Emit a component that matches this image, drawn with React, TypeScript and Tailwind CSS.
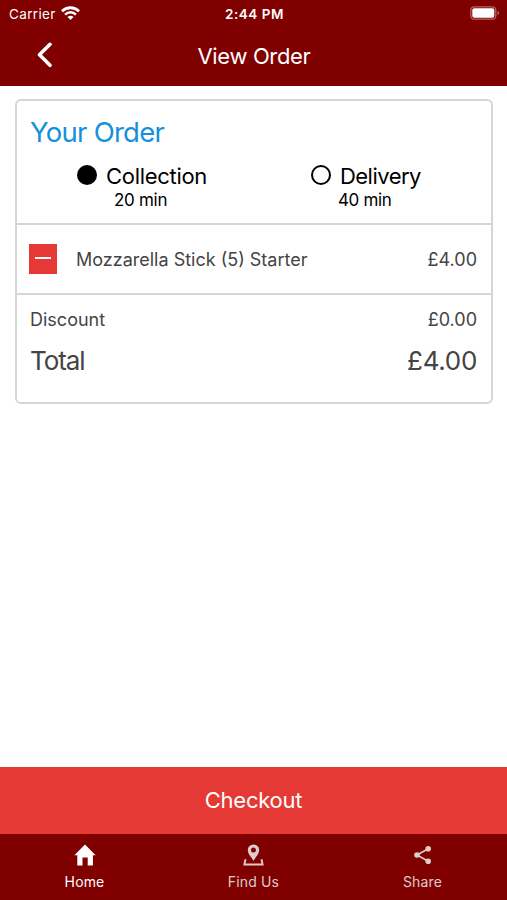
const tabs = [
  { label: "Home", icon: <HomeIcon />, active: true },
  { label: "Find Us", icon: <PinIcon />, active: false },
  { label: "Share", icon: <ShareIcon />, active: false },
];

function HomeIcon() {
  return (
    <svg className="w-[22px] h-[22px]" viewBox="0 0 22 22" fill="currentColor">
      <path d="M11 .6 21.6 11.2H18.9V21.4H13.7V13.6H8.5V21.4H3.3V11.2H.4z" />
    </svg>
  );
}

function PinIcon() {
  return (
    <svg className="w-[22px] h-[22px]" viewBox="0 0 22 22" fill="none">
      <path
        fillRule="evenodd"
        fill="currentColor"
        d="M10.500 .4a5.700 5.700 0 0 1 5.700 5.700c0 3.600-3.100 6.800-5.700 10.600C7.900 12.900 4.800 9.700 4.800 6.100A5.700 5.700 0 0 1 10.500 .4zm0 3.200a2.500 2.500 0 1 0 0 5 2.500 2.500 0 0 0 0-5z"
      />
      <path
        d="M2.500 15.200 1.400 20.500H19.600L18.500 15.200"
        stroke="currentColor"
        strokeWidth="1.900"
      />
    </svg>
  );
}

function ShareIcon() {
  return (
    <svg className="w-[22px] h-[22px]" viewBox="0 0 22 22" fill="currentColor">
      <path d="M16.200 4.800 5 11l11.200 6.200" fill="none" stroke="currentColor" strokeWidth="1.600" />
      <circle cx="16.200" cy="4.800" r="2.800" />
      <circle cx="5" cy="11" r="2.800" />
      <circle cx="16.200" cy="17.200" r="2.800" />
    </svg>
  );
}

function StatusBar() {
  return (
    <div className="grid grid-cols-3 items-center h-[28px] pl-[9px] pr-[7px] text-[13.5px]">
      <div className="flex items-center gap-[5px]">
        <span className="tracking-[0.35px]">Carrier</span>
        <svg className="w-[19px] h-[14px] -mt-[2px]" viewBox="0 0 19 14" fill="none">
          <path d="M1 5.200a12.200 12.200 0 0 1 17 0" stroke="white" strokeWidth="2.800" />
          <path d="M4.100 8.600a7.500 7.500 0 0 1 10.800 0" stroke="white" strokeWidth="2.500" />
          <path d="M6.500 11a4 4 0 0 1 6 0L9.500 14z" fill="white" />
        </svg>
      </div>
      <span className="text-center font-semibold tracking-[0.5px] whitespace-nowrap">2:44 PM</span>
      <svg className="w-[30px] h-[14px] justify-self-end -mt-[2px]" viewBox="0 0 30 14" fill="none">
        <rect x=".8" y=".8" width="25" height="12.400" rx="3.500" stroke="white" strokeOpacity=".4" strokeWidth="1.300" />
        <rect x="2.300" y="2.300" width="22" height="9.400" rx="2" fill="white" />
        <path d="M27.500 4.800c2 .8 2 3.600 0 4.400z" fill="white" fillOpacity=".45" />
      </svg>
    </div>
  );
}

function App() {
  return (
    <div className="flex flex-col h-[900px] bg-white font-['Inter',sans-serif] text-white">
      <header className="h-[86px] bg-[#800000]">
        <StatusBar />
        <div className="grid grid-cols-[60px_1fr_60px] items-center h-[56px]">
          <button className="pl-[37px] pb-[2px]">
            <svg className="w-[15px] h-[26px]" viewBox="0 0 15 26" fill="none">
              <path d="M13 2.300 2.500 12.800l10.500 10.500" stroke="white" strokeWidth="3.600" strokeLinecap="round" strokeLinejoin="round" />
            </svg>
          </button>
          <h1 className="pl-px text-center text-[22px] tracking-[-0.35px]">View Order</h1>
        </div>
      </header>

      <main className="flex-1 pl-[15px] pr-[14px] pt-[13px]">
        <section className="h-[305px] border-2 border-[#d6d6d6] rounded-md text-[#444444]">
          <div className="h-[124px] border-b-2 border-[#d6d6d6] text-black">
            <h2 className="pt-[13px] pl-[13px] text-[27.5px] leading-[36px] tracking-[-0.75px] text-[#1690dc]">Your Order</h2>
            <div className="flex justify-between pt-[12px] pl-[60px] pr-[70px]">
              <div>
                <div className="flex items-center gap-[9px] text-[22px] leading-[28px] tracking-[-0.3px]">
                  <span className="w-[20px] h-[20px] -mt-[2px] rounded-full bg-black" />
                  Collection
                </div>
                <p className="pl-[37px] text-[17px] leading-[20px] tracking-[-0.3px]">20 min</p>
              </div>
              <div>
                <div className="flex items-center gap-[9px] text-[22px] leading-[28px] tracking-[-0.5px]">
                  <span className="w-[20px] h-[20px] -mt-[2px] rounded-full border-2 border-black" />
                  Delivery
                </div>
                <p className="pl-[27px] text-[17px] leading-[20px] tracking-[-0.3px]">40 min</p>
              </div>
            </div>
          </div>

          <div className="flex items-center h-[70px] pl-[12px] pr-[14px] border-b-2 border-[#d6d6d6] text-[18px]">
            <button className="flex justify-center items-center w-[28px] h-[30px] pb-[2px] bg-[#e53935]">
              <span className="w-[16px] h-[2px] bg-white" />
            </button>
            <span className="ml-[19px]">Mozzarella Stick (5) Starter</span>
            <span className="ml-auto">£4.00</span>
          </div>

          <div className="pl-[13px] pr-[14px] pt-[12px]">
            <div className="flex justify-between text-[18px] leading-[26px]">
              <span>Discount</span>
              <span>£0.00</span>
            </div>
            <div className="flex justify-between pt-[10px] text-[26px] leading-[36px]">
              <span className="tracking-[-1.1px]">Total</span>
              <span className="tracking-[-0.3px]">£4.00</span>
            </div>
          </div>
        </section>
      </main>

      <button className="h-[67px] bg-[#e53935] text-[22px] tracking-[-0.25px]">Checkout</button>

      <nav className="grid grid-cols-3 h-[66px] bg-[#800000]">
        {tabs.map((tab) => (
          <div
            key={tab.label}
            className={`flex flex-col items-center pt-[10px] ${tab.active ? "text-white" : "text-[#dccccc]"}`}
          >
            {tab.icon}
            <span className="mt-[6px] text-[14px] leading-[20px] tracking-[0.15px]">{tab.label}</span>
          </div>
        ))}
      </nav>
    </div>
  );
}

export default App;
